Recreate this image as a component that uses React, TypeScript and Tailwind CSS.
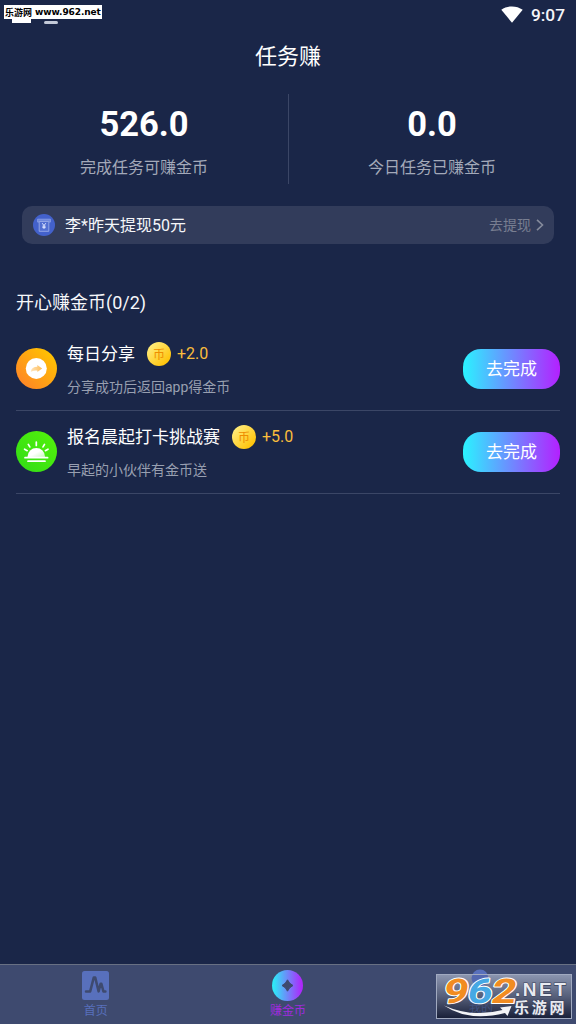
import type { ReactNode } from 'react';

const withdrawalNotice = '李*昨天提现50元';

function WifiIcon() {
  return (
    <svg width="22" height="18" viewBox="0 0 22 18" fill="#fff">
      <path d="M0.3 3.8C6.4-.7 15.6-.7 21.7 3.8L11 16.8Z" />
    </svg>
  );
}

function StatusBar() {
  return (
    <div className="relative flex h-[30px] items-center justify-end pr-[11px]">
      <WifiIcon />
      <span className="ml-2 text-[17.3px] leading-[30px] font-medium text-[#f4f5f9]">9:07</span>
      <div className="absolute top-[19px] left-3 h-1 w-[19px] bg-white" />
      <div className="absolute top-[21px] left-11 h-[3px] w-[14px] rounded-sm bg-[#c3c9d8]" />
      <div className="absolute top-[5px] left-1 flex h-[14px] w-[98px] items-center bg-white pl-px whitespace-nowrap text-black">
        <span className="pt-px font-['Noto_Sans_CJK_SC',sans-serif] text-[9px] leading-[13px] font-bold">乐游网</span>
        <span className="ml-[3px] font-['DejaVu_Sans',sans-serif] text-[9px] leading-[14px] font-bold tracking-[-0.1px]">www.962.net</span>
      </div>
    </div>
  );
}

function Stat({ value, label }: { value: string; label: string }) {
  return (
    <div className="flex flex-1 flex-col items-center pt-[10px]">
      <span className="text-[34.5px] leading-10 font-bold text-white">{value}</span>
      <span className="mt-3 text-[16px] leading-6 text-[#a3a9b9]">{label}</span>
    </div>
  );
}

function BoothIcon() {
  return (
    <svg width="22" height="22" viewBox="0 0 22 22" fill="none">
      <circle cx="11" cy="11" r="11" fill="#4361cb" />
      <path d="M4.6 5.2h12.8v2.9H4.6z" fill="#6f88dc" stroke="#8ea2e6" strokeWidth="0.8" />
      <path d="M6.2 7.5h9.6v9.8H6.2z" fill="#526fd2" stroke="#91a4e5" />
      <path d="m9.2 9.2 1.8 2.4 1.8-2.4M11 11.4v3.5M9.4 12.2h3.200M9.4 13.6h3.200" stroke="#dbe3ff" strokeWidth="1" />
    </svg>
  );
}

function ShareIcon() {
  return (
    <svg className="relative -top-px size-[41px]" viewBox="0 0 41 41">
      <defs>
        <linearGradient id="share-fill" x1="0" y1="1" x2="1" y2="0">
          <stop offset="0.1" stopColor="#ff8526" />
          <stop offset="0.9" stopColor="#ffc400" />
        </linearGradient>
        <linearGradient id="share-arrow" x1="0" y1="0" x2="1" y2="0">
          <stop stopColor="#ffe3b8" />
          <stop offset="1" stopColor="#ffbd58" />
        </linearGradient>
      </defs>
      <circle cx="20.5" cy="20.5" r="20.5" fill="url(#share-fill)" />
      <circle cx="20.3" cy="20.4" r="10.5" fill="#fff" />
      <path d="M14.8 23.7c.4-3.300 2.800-4.900 6.500-4.900v-1.700l4.900 3.500-4.900 3.500v-1.700c-2.800 0-4.700.3-6.500 1.300Z" fill="url(#share-arrow)" />
    </svg>
  );
}

function SunriseIcon() {
  return (
    <svg className="relative -top-px size-[41px]" viewBox="0 0 41 41">
      <defs>
        <linearGradient id="sun-fill" x1="1" y1="0" x2="0" y2="1">
          <stop stopColor="#55f20b" />
          <stop offset="1" stopColor="#31dc16" />
        </linearGradient>
        <linearGradient id="sun-body" x1="0" y1="0" x2="1" y2="1">
          <stop offset="0.5" stopColor="#fff" />
          <stop offset="1" stopColor="#c4f7b8" />
        </linearGradient>
      </defs>
      <circle cx="20.5" cy="20.5" r="20.5" fill="url(#sun-fill)" />
      <path d="M11.6 26.4v-1a8.7 8.5 0 0 1 17.4 0v1Z" fill="url(#sun-body)" />
      <path
        d="M9 26.7h22.6M12 30.2h17M20.3 11v3.4M12.3 13.4l1.5 2.5M28.5 13.4 27 15.9M8.6 18.2l2.6 1.5M32 18.2l-2.6 1.5"
        stroke="#fff"
        strokeWidth="1.7"
        strokeLinecap="round"
      />
    </svg>
  );
}

interface TaskProps {
  icon: ReactNode;
  title: string;
  reward: string;
  note: string;
}

function Task({ icon, title, reward, note }: TaskProps) {
  return (
    <div className="flex h-[83px] items-center border-b border-[#3b4666]">
      {icon}
      <div className="ml-[10px] flex flex-1 flex-col">
        <div className="flex h-6 items-center">
          <span className="text-[17px] leading-6 text-white">{title}</span>
          <span className="ml-3 flex size-6 items-center justify-center rounded-full bg-linear-to-br/srgb from-[#ffed80] from-10% to-[#ffc000] to-90% pt-[2px] text-[12px] leading-[22px] text-[#ee8d00]">
            币
          </span>
          <span className="ml-[6px] text-[16px] leading-6 text-[#fabd3c]">{reward}</span>
        </div>
        <span className="mt-[11px] text-[14px] leading-5 text-[#989fb0]">{note}</span>
      </div>
      <button className="h-10 w-[97px] rounded-[18px] bg-linear-to-r/srgb from-[#2af3ff] to-[#b420ff] text-[17px] leading-10 text-white">
        去完成
      </button>
    </div>
  );
}

function HomeIcon() {
  return (
    <svg width="27" height="29" viewBox="0 0 27 29" fill="none">
      <rect width="27" height="29" rx="2.5" fill="#5870bc" />
      <path
        d="M4 20.400h4.200L11.800 6.400h1.400l3.400 14 2-7.700h.8l2 7.700h2"
        stroke="#3e4a6f"
        strokeWidth="2.500"
        strokeLinecap="round"
        strokeLinejoin="round"
      />
    </svg>
  );
}

function EarnIcon() {
  return (
    <svg width="31" height="31" viewBox="0 0 31 31">
      <defs>
        <linearGradient id="earn-fill">
          <stop offset="0.05" stopColor="#2ee9f7" />
          <stop offset="0.95" stopColor="#ae28fb" />
        </linearGradient>
      </defs>
      <circle cx="15.5" cy="15.5" r="15.5" fill="url(#earn-fill)" />
      <path d="M15.5 9.8Q17.2 13.8 21 15.5 17.2 17.2 15.5 21.2 13.8 17.2 10 15.5 13.8 13.8 15.5 9.8Z" fill="#3e4a6f" stroke="#3e4a6f" />
    </svg>
  );
}

function SiteBadge() {
  return (
    <svg className="absolute right-1 bottom-[5px]" width="136" height="54" viewBox="0 -9 136 54">
      <defs>
        <linearGradient id="badge-fill" x1="0" y1="0" x2="0" y2="1">
          <stop stopColor="#8c96b0" />
          <stop offset="0.5" stopColor="#565f7a" />
          <stop offset="1" stopColor="#181f38" />
        </linearGradient>
      </defs>
      <circle cx="44" cy="4" r="8.5" fill="#5870bc" />
      <rect x="0.5" y="0.5" width="135" height="44" fill="url(#badge-fill)" stroke="#a1aac0" />
      <path d="M35.5 4a8.5 8.5 0 0 1 1-3h15a8.5 8.5 0 0 1 1 3 8.5 8.5 0 0 1-17 0Z" fill="#5368b0" />
      <text x="33" y="38" fontFamily="Noto Sans CJK SC" fontSize="12" fill="#40517f">
        我的
      </text>
      <g fontFamily="Roboto" fontSize="34" fontWeight="700" stroke="#fff" strokeWidth="2" paintOrder="stroke" strokeLinejoin="round">
        <text transform="translate(6 28.5) skewX(-10) scale(1.28 1)" fill="#f18c21">
          9
        </text>
        <text transform="translate(30 28.5) skewX(-10) scale(1.28 1)" fill="#46a8e4">
          6
        </text>
        <text transform="translate(54 28.5) skewX(-10) scale(1.28 1)" fill="#f18c21">
          2
        </text>
      </g>
      <path d="M8 31.5Q36 44 66.500 36l-2.500-2.500 11.500-1.500-4 10-2.500-3Q32 48 8 31.500Z" fill="#f3f4f7" />
      <g stroke="#3a425c" strokeWidth="1.2" paintOrder="stroke" fill="#e8eaf0">
        <text x="79" y="21.5" fontFamily="Liberation Sans" fontSize="19" fontWeight="700" letterSpacing="2.500">
          .NET
        </text>
        <text x="78" y="39" fontFamily="Noto Sans CJK SC" fontSize="15" fontWeight="700" letterSpacing="2.700">
          乐游网
        </text>
      </g>
    </svg>
  );
}

export default function App() {
  return (
    <div className="flex h-[1024px] w-[576px] flex-col overflow-hidden bg-[#1a2648] font-[Roboto,'Noto_Sans_CJK_SC',sans-serif]">
      <StatusBar />
      <h1 className="h-16 pt-px text-center text-[22px] leading-[52px] text-white">任务赚</h1>

      <section className="flex h-[90px]">
        <Stat value="526.0" label="完成任务可赚金币" />
        <div className="-mx-[0.5px] w-px bg-[#3b4666]" />
        <Stat value="0.0" label="今日任务已赚金币" />
      </section>

      <section className="mx-[22px] mt-[22px] flex h-[38px] items-center rounded-[10px] bg-[#323c5b] pr-[10px] pl-[11px]">
        <BoothIcon />
        <span className="ml-[10px] flex-1 pt-[2px] text-[16px] leading-6 text-[#f5f6f9]">{withdrawalNotice}</span>
        <span className="text-[14px] leading-5 text-[#787e91]">去提现</span>
        <svg className="ml-[5px]" width="8" height="12" viewBox="0 0 8 12" fill="none" stroke="#858b9c" strokeWidth="1.6">
          <path d="m1 .9 5.5 5.1L1 11.1" />
        </svg>
      </section>

      <main className="flex-1 px-4 pt-[47px]">
        <h2 className="mb-3 h-6 text-[18px] leading-6 text-[#f6f7fa]">开心赚金币(0/2)</h2>
        <div className="pt-px">
          <Task icon={<ShareIcon />} title="每日分享" reward="+2.0" note="分享成功后返回app得金币" />
          <Task icon={<SunriseIcon />} title="报名晨起打卡挑战赛" reward="+5.0" note="早起的小伙伴有金币送" />
        </div>
      </main>

      <nav className="relative flex h-[60px] border-t border-[#687083] bg-[#3e4a6f] text-[12px] leading-4">
        <div className="flex flex-1 flex-col items-center pt-[6px] pr-px text-[#5870bc]">
          <HomeIcon />
          <span className="mt-[3px]">首页</span>
        </div>
        <div className="flex flex-1 flex-col items-center pt-[5px] pr-px text-[#a02bdf]">
          <EarnIcon />
          <span className="mt-[2px]">赚金币</span>
        </div>
        <div className="flex-1" />
        <SiteBadge />
      </nav>
    </div>
  );
}
